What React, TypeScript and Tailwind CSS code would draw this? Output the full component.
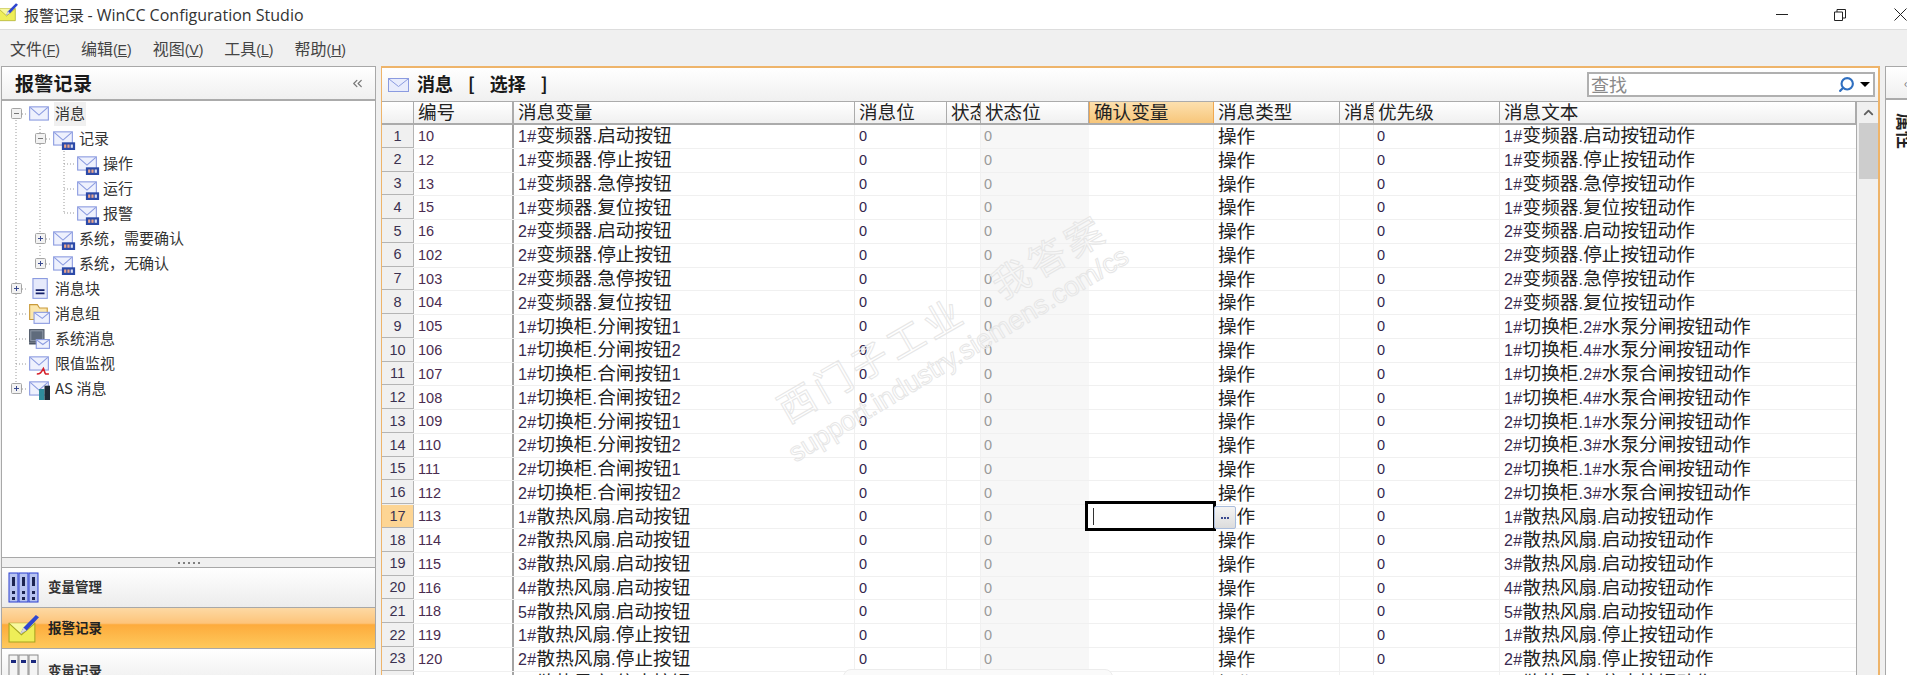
import React from 'react';
import { ChevronsLeft, ChevronUp, Search } from 'lucide-react';

const cjk = "font-['Noto_Sans_CJK_SC','Liberation_Sans',sans-serif]";

const cols = 'grid grid-cols-[32px_100px_341px_92px_34px_108px_125px_126px_34px_126px_356px]';

const headers = ['编号', '消息变量', '消息位', '状态变量', '状态位', '确认变量', '消息类型', '消息等级', '优先级', '消息文本'];

const rows: [number, string, string][] = [
  [10, '1#变频器.启动按钮', '1#变频器.启动按钮动作'],
  [12, '1#变频器.停止按钮', '1#变频器.停止按钮动作'],
  [13, '1#变频器.急停按钮', '1#变频器.急停按钮动作'],
  [15, '1#变频器.复位按钮', '1#变频器.复位按钮动作'],
  [16, '2#变频器.启动按钮', '2#变频器.启动按钮动作'],
  [102, '2#变频器.停止按钮', '2#变频器.停止按钮动作'],
  [103, '2#变频器.急停按钮', '2#变频器.急停按钮动作'],
  [104, '2#变频器.复位按钮', '2#变频器.复位按钮动作'],
  [105, '1#切换柜.分闸按钮1', '1#切换柜.2#水泵分闸按钮动作'],
  [106, '1#切换柜.分闸按钮2', '1#切换柜.4#水泵分闸按钮动作'],
  [107, '1#切换柜.合闸按钮1', '1#切换柜.2#水泵合闸按钮动作'],
  [108, '1#切换柜.合闸按钮2', '1#切换柜.4#水泵合闸按钮动作'],
  [109, '2#切换柜.分闸按钮1', '2#切换柜.1#水泵分闸按钮动作'],
  [110, '2#切换柜.分闸按钮2', '2#切换柜.3#水泵分闸按钮动作'],
  [111, '2#切换柜.合闸按钮1', '2#切换柜.1#水泵合闸按钮动作'],
  [112, '2#切换柜.合闸按钮2', '2#切换柜.3#水泵合闸按钮动作'],
  [113, '1#散热风扇.启动按钮', '1#散热风扇.启动按钮动作'],
  [114, '2#散热风扇.启动按钮', '2#散热风扇.启动按钮动作'],
  [115, '3#散热风扇.启动按钮', '3#散热风扇.启动按钮动作'],
  [116, '4#散热风扇.启动按钮', '4#散热风扇.启动按钮动作'],
  [118, '5#散热风扇.启动按钮', '5#散热风扇.启动按钮动作'],
  [119, '1#散热风扇.停止按钮', '1#散热风扇.停止按钮动作'],
  [120, '2#散热风扇.停止按钮', '2#散热风扇.停止按钮动作'],
  [121, '3#散热风扇.停止按钮', '3#散热风扇.停止按钮动作'],
];

// digits and # are set smaller than the CJK glyphs in the original grid font
const Mixed: React.FC<{ text: string }> = ({ text }) => (
  <span>
    {text.split(/([\x00-\x7f]+)/).map((part, i) =>
      /^[\x00-\x7f]+$/.test(part) ? (
        <span key={i} className="text-[16px] tracking-[0.4px] text-[#3a2c50] font-['Liberation_Sans',sans-serif]">
          {part}
        </span>
      ) : (
        <span key={i}>{part}</span>
      ),
    )}
  </span>
);

const Badge = () => (
  <g>
    <rect x="9" y="14" width="12" height="7" fill="#2c4aa8" />
    <rect x="11" y="16" width="2" height="3" fill="#e9a58c" />
    <rect x="14" y="16" width="2" height="3" fill="#e9a58c" />
    <rect x="17" y="16" width="2" height="3" fill="#d9dcf0" />
  </g>
);

const Envelope = () => (
  <g fill="none">
    <rect x="1.5" y="4.5" width="17" height="12" fill="#eef1fd" stroke="#8b9be0" />
    <path d="M2 5l8 7 8-7" stroke="#8b9be0" />
  </g>
);

type IconKind = 'mail' | 'badge' | 'block' | 'folder' | 'system' | 'limit' | 'as';

const TreeIcon: React.FC<{ kind: IconKind }> = ({ kind }) => (
  <svg width="20" height="22" viewBox="1 1 18 20" className="shrink-0 overflow-visible">
    {kind === 'mail' && <Envelope />}
    {kind === 'badge' && (
      <>
        <Envelope />
        <Badge />
      </>
    )}
    {kind === 'block' && (
      <>
        <rect x="4.5" y="1.5" width="13" height="18" fill="#e6eafb" stroke="#8b9be0" />
        <path d="M7 12h8M7 15h8" stroke="#14206a" strokeWidth="1.6" />
      </>
    )}
    {kind === 'folder' && (
      <>
        <path d="M1.5 16V2.5h7l2 3h7V16z" fill="#fbe7ad" stroke="#c99a3a" />
        <rect x="5.5" y="9.5" width="14" height="10" fill="#eef1fd" stroke="#8b9be0" />
        <path d="M6 10l7 5 6-5" fill="none" stroke="#8b9be0" />
      </>
    )}
    {kind === 'system' && (
      <>
        <rect x="1.5" y="2.5" width="13" height="11" fill="#8f99a8" stroke="#4a5464" />
        <rect x="3" y="4" width="10" height="8" fill="#5f6b7c" />
        <rect x="1" y="14" width="11" height="2" fill="#4a5464" />
        <rect x="7.5" y="11.5" width="12" height="8" fill="#eef1fd" stroke="#8b9be0" />
        <path d="M8 12l5.5 4 5.5-4" fill="none" stroke="#8b9be0" />
      </>
    )}
    {kind === 'limit' && (
      <>
        <Envelope />
        <path d="M8 20c3 0 4-1 6-5 1 2 1 4 2 5h3" fill="none" stroke="#d6202a" strokeWidth="1.4" />
      </>
    )}
    {kind === 'as' && (
      <>
        <Envelope />
        <rect x="10" y="11" width="5" height="10" fill="#2f8c9c" />
        <rect x="15" y="8" width="5" height="13" fill="#1f2a36" />
      </>
    )}
  </svg>
);

const Expander: React.FC<{ open: boolean }> = ({ open }) => (
  <svg width="11" height="11" viewBox="0 0 11 11">
    <rect x="0.5" y="0.5" width="10" height="10" rx="1" fill="#f2f2f2" stroke="#a4a4a4" />
    <path d="M3 5.5h5" stroke={open ? '#777' : '#3a4a90'} />
    {!open && <path d="M5.5 3v5" stroke="#3a4a90" />}
  </svg>
);

const treeItems: { label: string; level: 0 | 1 | 2; icon: IconKind; box?: 'open' | 'closed' }[] = [
  { label: '消息', level: 0, icon: 'mail', box: 'open' },
  { label: '记录', level: 1, icon: 'badge', box: 'open' },
  { label: '操作', level: 2, icon: 'badge' },
  { label: '运行', level: 2, icon: 'badge' },
  { label: '报警', level: 2, icon: 'badge' },
  { label: '系统\uFF0C需要确认', level: 1, icon: 'badge', box: 'closed' },
  { label: '系统\uFF0C无确认', level: 1, icon: 'badge', box: 'closed' },
  { label: '消息块', level: 0, icon: 'block', box: 'closed' },
  { label: '消息组', level: 0, icon: 'folder' },
  { label: '系统消息', level: 0, icon: 'system' },
  { label: '限值监视', level: 0, icon: 'limit' },
  { label: 'AS 消息', level: 0, icon: 'as', box: 'closed' },
];

const levelPad = ['pl-[9px]', 'pl-[33px]', 'pl-[57px]'];

const PenMail: React.FC<{ size: number; className?: string }> = ({ size, className }) => (
  <svg width={size} height={size} viewBox="0 0 30 30" className={className}>
    <path d="M1 10h25v18H1z" fill="#eeee58" stroke="#a6a620" />
    <path d="M1 10l12 11 13-11" fill="#f8f8a0" stroke="#a6a620" />
    <path d="M12 20l3-6L27 2l3 2-12 13z" fill="#2f46d0" />
    <path d="M12 20l3-6 3 3z" fill="#d8d8d8" />
  </svg>
);

const TagColumns = () => (
  <svg width="31" height="31" viewBox="0 0 31 31">
    {[1, 11, 21].map((x) => (
      <g key={x}>
        <rect x={x} y="1" width="9" height="29" fill="#b8c4f0" stroke="#2a3fd0" />
        <rect x={x + 3} y="5" width="3" height="9" fill="#1c2450" />
        <rect x={x + 3} y="19" width="3" height="3" fill="#1c2450" />
        <rect x={x + 3} y="25" width="3" height="3" fill="#1c2450" />
      </g>
    ))}
  </svg>
);

const LogColumns = () => (
  <svg width="31" height="31" viewBox="0 0 31 31">
    {[1, 11, 21].map((x) => (
      <g key={x}>
        <rect x={x} y="1" width="9" height="34" fill="#f4f4f4" stroke="#8a8a8a" />
        <rect x={x + 2} y="6" width="5" height="3" fill="#1c2a80" />
      </g>
    ))}
  </svg>
);

const Sidebar = () => (
  <aside className="w-[375px] shrink-0 flex flex-col border-x border-t border-[#a8a8a8] bg-white overflow-hidden">
    <div className="h-[34px] shrink-0 flex items-center justify-between pl-[13px] pr-[10px] border-b-2 border-[#ababab] bg-gradient-to-b from-white to-[#f0f0f0]">
      <span className="text-[19px] font-bold tracking-[0.3px] text-[#1a1a1a]">报警记录</span>
      <ChevronsLeft size={15} className="text-[#777]" />
    </div>

    <div className="relative flex-1 min-h-0 text-[15px] text-[#333]">
      <svg className="absolute inset-0 w-full h-full" fill="none" stroke="#9a9a9a" strokeDasharray="1 2">
        <g transform="translate(-2,-101)">
          <path d="M16 120V389M40 126V264M64 148V213" />
          <path d="M16 114H28M16 289H28M16 314H28M16 339H28M16 364H28M16 389H28" />
          <path d="M40 139H52M40 239H52M40 264H52M64 164H76M64 189H76M64 213H76" />
        </g>
      </svg>
      {treeItems.map((item, i) => (
        <div key={item.label} className={`relative h-[25px] flex items-center ${levelPad[item.level]}`}>
          <div className="w-[11px] h-[11px] shrink-0 flex">
            {item.box && <Expander open={item.box === 'open'} />}
          </div>
          <div className="ml-[7px] flex items-center">
            <TreeIcon kind={item.icon} />
          </div>
          <span className={`ml-[5px] px-px pb-[2px] leading-[22px] whitespace-nowrap ${i === 0 ? 'bg-[#f0f0f0]' : ''}`}>{item.label}</span>
        </div>
      ))}
    </div>

    <div className="h-[118px] shrink-0 overflow-hidden">
      <div className="h-[11px] border-y border-[#a8a8a8] bg-[#f0f0f0] flex items-center justify-center gap-[3px]">
        {[0, 1, 2, 3, 4].map((d) => (
          <span key={d} className="w-[2px] h-[2px] bg-[#808080]" />
        ))}
      </div>
      <div className="h-[40px] flex items-center gap-[9px] pl-[6px] border-b border-[#a8a8a8] bg-gradient-to-b from-white to-[#ececec]">
        <TagColumns />
        <span className="text-[13.5px] font-bold text-[#333] pb-[2px]">变量管理</span>
      </div>
      <div className="h-[41px] flex items-center gap-[9px] pl-[6px] border-b border-[#a8a8a8] bg-[linear-gradient(#fdd9a4,#fdc47a_38%,#fdab3c_42%,#fec95c)]">
        <PenMail size={31} />
        <span className="text-[13.5px] font-bold text-[#222] pb-[2px]">报警记录</span>
      </div>
      <div className="h-[40px] flex items-center gap-[9px] pl-[6px] bg-gradient-to-b from-white to-[#ececec]">
        <LogColumns />
        <span className="text-[13.5px] font-bold text-[#333] pt-[3px]">变量记录</span>
      </div>
    </div>
  </aside>
);

const Table = () => (
  <div className="flex flex-1 min-h-0 overflow-hidden">
    <div className="w-[1474px] shrink-0 text-[18.6px] text-[#222] leading-none">
      <div className={`${cols} h-[24px] border-y border-b-2 border-[#ababab]`}>
        <div className="bg-gradient-to-b from-white to-[#f0f0f0] border-r border-[#ababab]" />
        {headers.map((h, i) => (
          <div
            key={h}
            className={`flex items-center pl-1 pb-[2px] overflow-hidden whitespace-nowrap ${
              h === '确认变量'
                ? 'bg-gradient-to-b from-[#fce0ae] to-[#f7c67a] border-x border-[#f0a850]'
                : 'bg-gradient-to-b from-white to-[#f0f0f0] border-r border-[#ababab]'
            } ${i === 0 ? 'border-r-2' : ''}`}
          >
            {h}
          </div>
        ))}
      </div>
      {rows.map(([id, variable, text], idx) => (
        <div key={id} className={`${cols} h-[23.77px] border-b border-[#f0f0f0]`}>
          <div
            className={`flex items-center justify-center text-[14.5px] font-['Liberation_Sans',sans-serif] text-[#3b3150] border-b border-r border-[#b4b4b4] ${
              idx === 16 ? 'bg-[#fdd594]' : 'bg-[#f0f0f0]'
            }`}
          >
            {idx + 1}
          </div>
          <div className="flex items-center pl-1 border-r-2 border-[#a4a4a4] text-[14.5px] font-['Liberation_Sans',sans-serif] text-[#4a2c50]">{id}</div>
          <div className="flex items-center pl-1 pb-[2px] border-r border-[#f0f0f0] whitespace-nowrap">
            <Mixed text={variable} />
          </div>
          <div className="flex items-center pl-1 border-r border-[#f0f0f0] text-[14.5px] font-['Liberation_Sans',sans-serif] text-[#33264d]">0</div>
          <div className="border-r border-[#f0f0f0]" />
          <div className="flex items-center pl-[3px] bg-[#f7f7f7] text-[14.5px] font-['Liberation_Sans',sans-serif] text-[#9a9a9a]">0</div>
          <div className="relative border-r border-[#f0f0f0]">
            {idx === 16 && (
              <>
                <div className="absolute z-10 left-[-4px] top-[-4px] w-[131px] h-[30px] border-[3px] border-black bg-white flex items-center pl-[5px]">
                  <span className="w-px h-[17px] bg-[#333]" />
                </div>
                <div className="absolute z-20 left-[125px] top-px w-[22px] h-[23px] rounded-[2px] border border-[#a9bcdc] bg-gradient-to-b from-[#f4f4f4] to-[#dcdcdc] flex items-center justify-center gap-px">
                  <span className="w-[2px] h-[2px] bg-[#3a4a90]" />
                  <span className="w-[2px] h-[2px] bg-[#3a4a90]" />
                  <span className="w-[2px] h-[2px] bg-[#3a4a90]" />
                </div>
              </>
            )}
          </div>
          <div className="flex items-center pl-1 pb-[2px] border-r border-[#f0f0f0]">操作</div>
          <div className="border-r border-[#f0f0f0]" />
          <div className="flex items-center pl-[3px] border-r border-[#f0f0f0] text-[14.5px] font-['Liberation_Sans',sans-serif] text-[#33264d]">0</div>
          <div className="flex items-center pl-1 pb-[2px] whitespace-nowrap">
            <Mixed text={text} />
          </div>
        </div>
      ))}
    </div>

    <div className="w-[23px] shrink-0 border-l border-t border-[#ababab] bg-[#f0f0f0] flex flex-col items-center">
      <div className="h-[21px] flex items-center">
        <ChevronUp size={15} strokeWidth={3} className="text-[#606060]" />
      </div>
      <div className="w-[19px] h-[56px] bg-[#cdcdcd]" />
    </div>
  </div>
);

const MainPanel = () => (
  <section className="w-[1499px] shrink-0 ml-[5px] flex flex-col border-x-2 border-t-2 border-[#eeb46a] border-l-[1px] bg-white overflow-hidden">
    <div className="h-[33px] shrink-0 flex items-center pl-[6px] pr-[3px] bg-gradient-to-b from-white to-[#f0f0f0]">
      <svg width="21" height="16" viewBox="0 0 21 16">
        <rect x="0.5" y="1.5" width="20" height="13" fill="#e8ecfc" stroke="#8b9be0" />
        <path d="M1 2l9.5 7.5L20 2" fill="none" stroke="#8b9be0" />
      </svg>
      <div className="ml-[8px] pb-[3px] flex items-center gap-[15px] text-[18px] font-bold text-[#1a1a1a] whitespace-nowrap">
        <span>消息</span>
        <span>[</span>
        <span>选择</span>
        <span>]</span>
      </div>
      <div className="ml-auto w-[288px] h-[25px] flex items-center border-2 border-[#b0b0b0] bg-white pl-[2px] pr-[3px]">
        <span className="text-[18px] leading-[18px] pb-[2px] text-[#8a8a8a]">查找</span>
        <Search size={17} strokeWidth={3} className="ml-auto text-[#2f6fc0] -scale-x-100" />
        <span className="ml-[5px] w-0 h-0 border-x-[5px] border-x-transparent border-t-[5px] border-t-black" />
      </div>
    </div>
    <Table />
  </section>
);

const Watermark = () => (
  <div className="absolute inset-0 z-30 pointer-events-none overflow-hidden text-transparent [-webkit-text-stroke:1px_#e6e6e6]">
    <span className="absolute left-[780px] top-[392px] origin-left -rotate-[30deg] text-[37px] tracking-[5px] leading-none whitespace-nowrap">西门子工业</span>
    <span className="absolute left-[994px] top-[268px] origin-left -rotate-[30deg] text-[37px] tracking-[5px] leading-none whitespace-nowrap">我答案</span>
    <span className="absolute left-[791px] top-[442px] origin-left -rotate-[31deg] text-[27px] leading-none whitespace-nowrap font-['Liberation_Sans',sans-serif]">support.industry.siemens.com/cs</span>
  </div>
);

const App: React.FC = () => (
  <div className={`relative w-[1907px] h-[675px] flex flex-col overflow-hidden bg-[#f0f0f0] ${cjk}`}>
    <header className="h-[30px] shrink-0 flex items-center bg-white border-b border-[#dddddd] overflow-hidden">
      <PenMail size={20} className="-ml-[2px] -mt-[5px] shrink-0" />
      <span className="ml-[6px] text-[15px] text-[#333] whitespace-nowrap">
        报警记录 <span className="text-[16px] font-['Open_Sans',sans-serif]">- WinCC Configuration Studio</span>
      </span>
      <div className="ml-auto flex items-center">
        <span className="w-[12px] h-px bg-[#222]" />
        <svg width="12" height="12" viewBox="0 0 12 12" fill="none" stroke="#222" className="ml-[46px]">
          <path d="M.5 3h8v8.5h-8zM3 3V.5h8.5V9H9" />
        </svg>
        <svg width="13" height="13" viewBox="0 0 13 13" fill="none" stroke="#222" className="ml-[48px]">
          <path d="M.5.5l12 12M12.5.5l-12 12" />
        </svg>
      </div>
    </header>

    <nav className="h-[36px] shrink-0 flex items-center pl-[10px] gap-[21px] text-[16px] text-[#444]">
      {[
        ['文件', 'F'],
        ['编辑', 'E'],
        ['视图', 'V'],
        ['工具', 'L'],
        ['帮助', 'H'],
      ].map(([label, key]) => (
        <span key={label} className="whitespace-nowrap">
          {label}
          <span className="text-[14px] font-['Liberation_Sans',sans-serif]">
            (<span className="underline">{key}</span>)
          </span>
        </span>
      ))}
    </nav>

    <div className="flex-1 min-h-0 flex pl-px">
      <Sidebar />
      <MainPanel />
      <aside className="ml-[5px] flex-1 flex flex-col border-l border-t border-[#a8a8a8] bg-white overflow-hidden">
        <div className="h-[33px] shrink-0 flex items-center pl-[18px] border-b-2 border-[#ababab] bg-gradient-to-b from-white to-[#f0f0f0] text-[#777] text-[12px]">‹</div>
        <div className="self-start ml-[11px] mt-[13px] text-[18px] font-bold text-[#222] leading-none [writing-mode:vertical-rl] [text-orientation:sideways] whitespace-nowrap">属性</div>
      </aside>
    </div>

    <div className="absolute left-[843px] top-[669px] w-[270px] h-[20px] rounded-[8px] border border-[#ececec] bg-[#fafafa] z-20" />
    <Watermark />
  </div>
);

export default App;
